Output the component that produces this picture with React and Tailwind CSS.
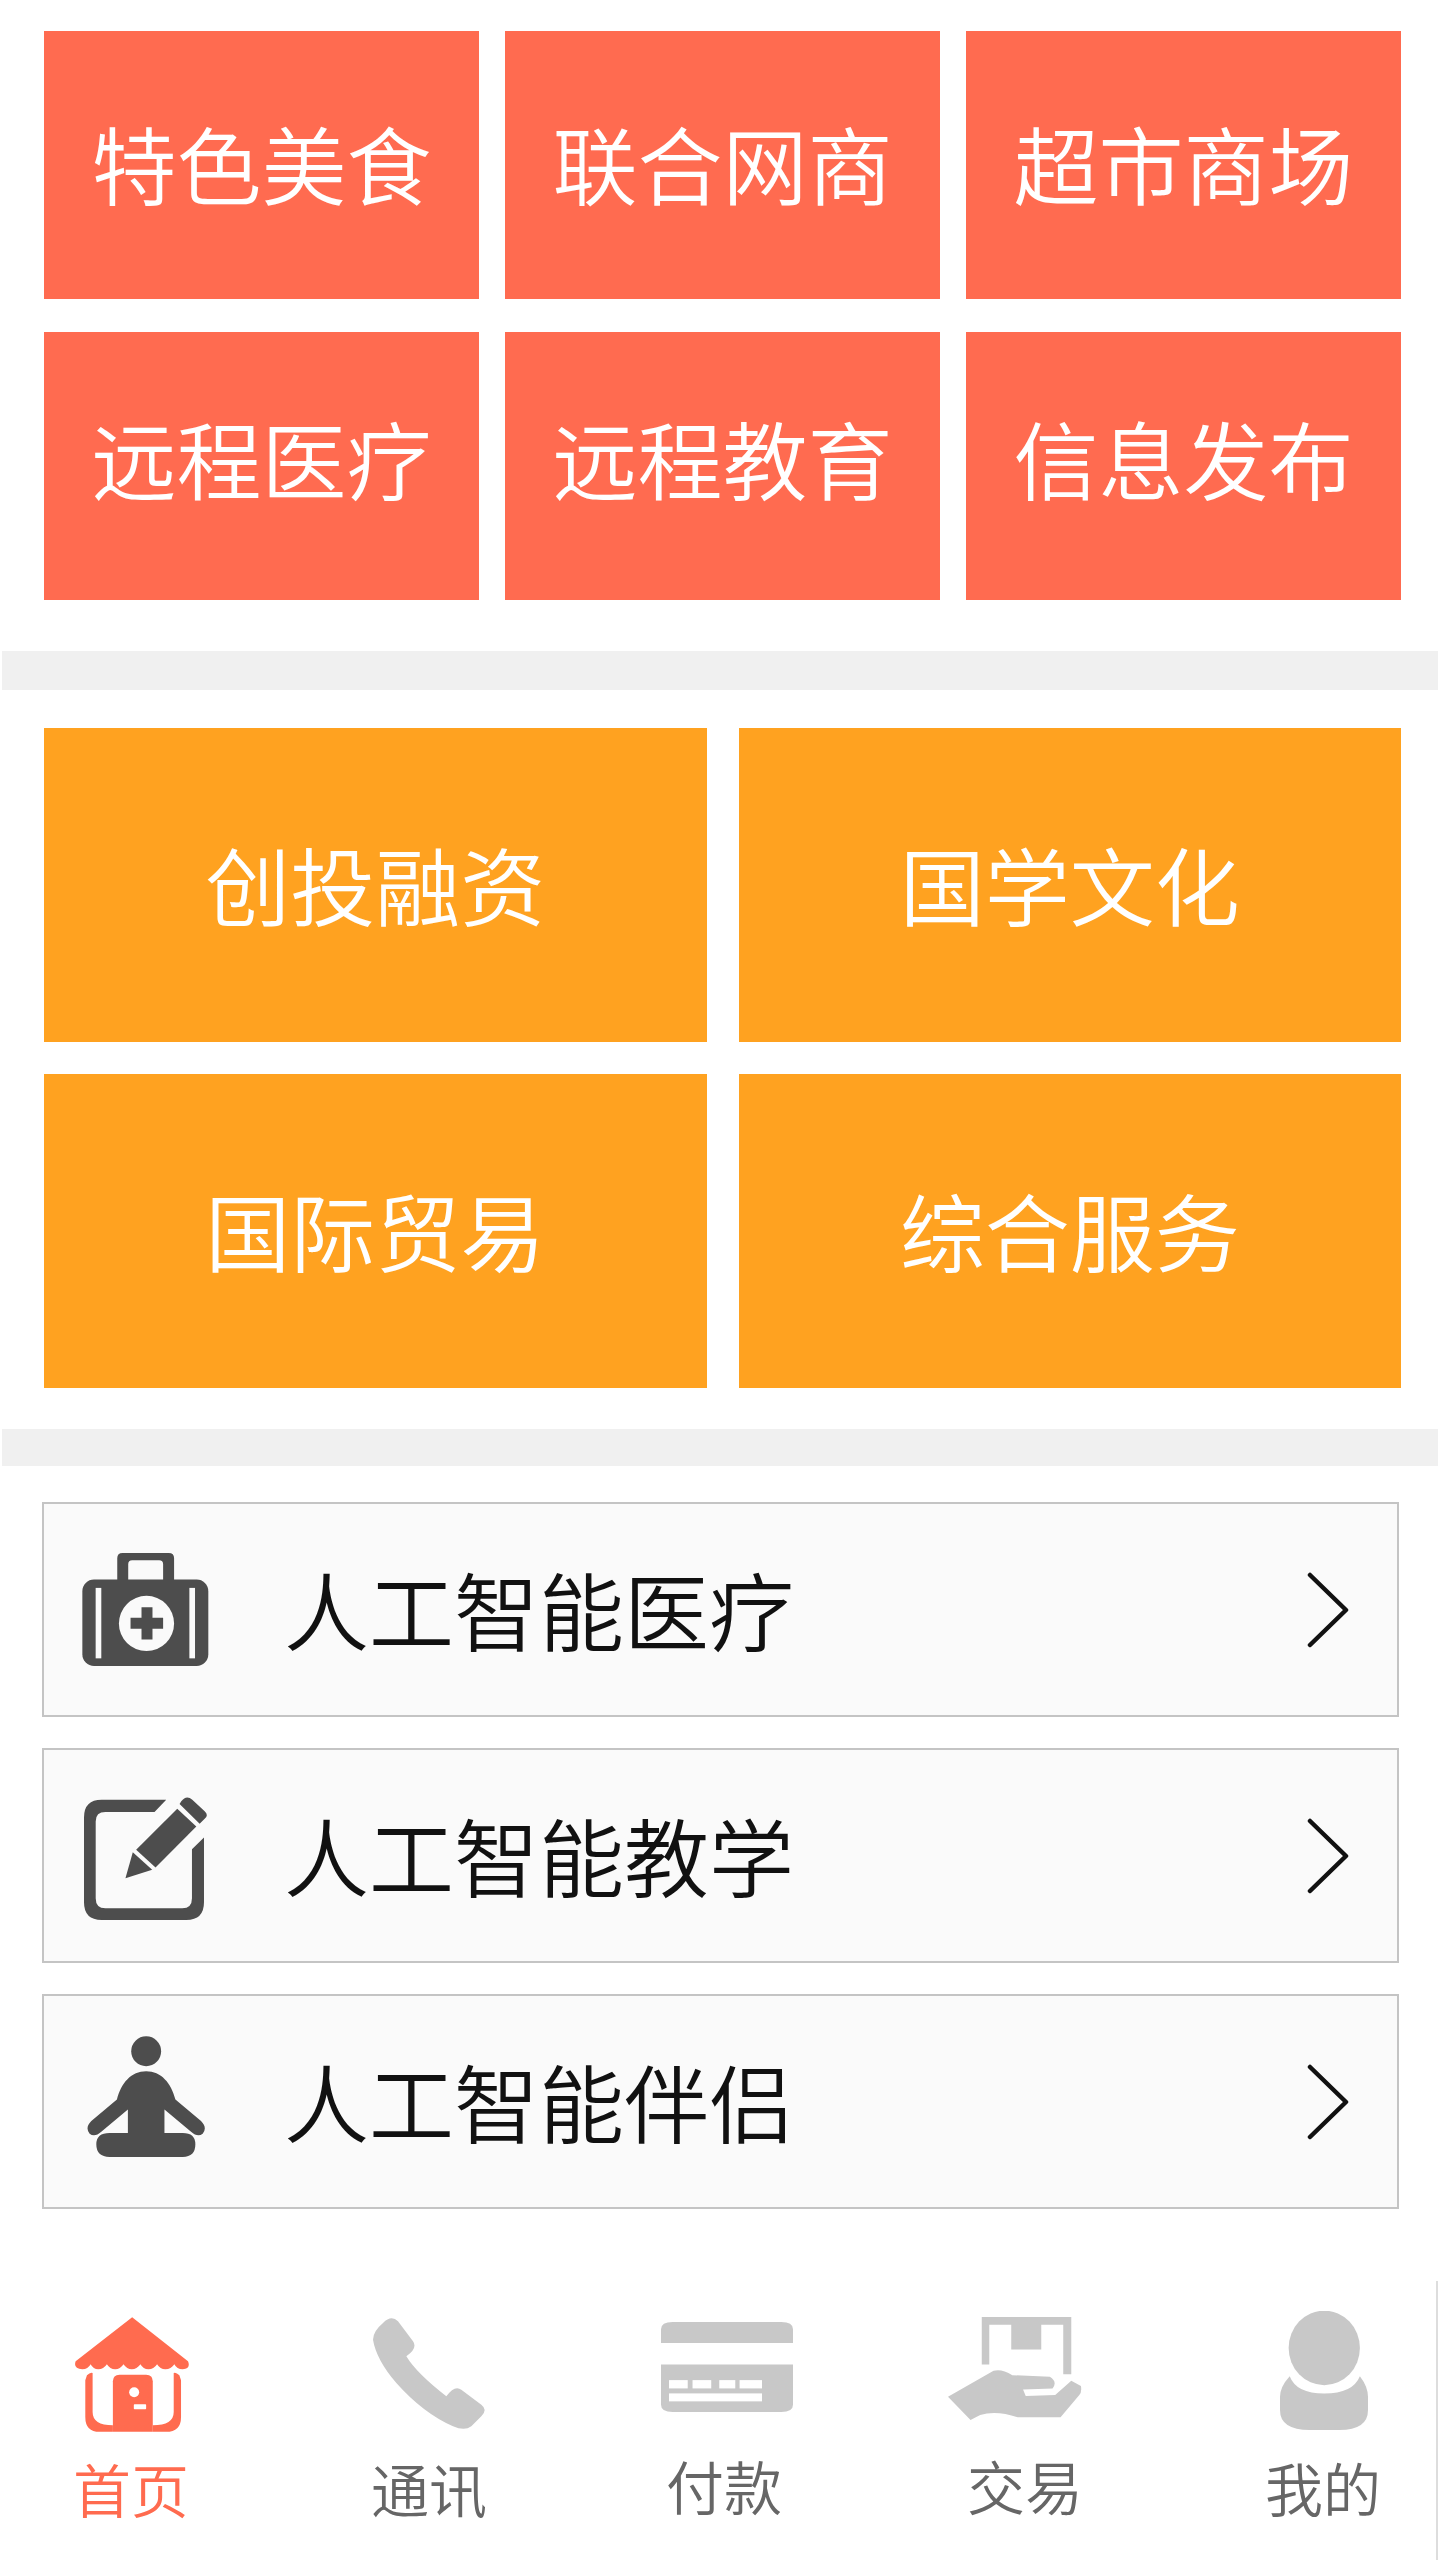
const D = "#4d4d4d";
const G = "#c8c8c8";
const R = "#ff6b4f";

const Medic = () => (
  <svg width="127" height="113" viewBox="247 218 380 340">
    <path fillRule="evenodd" fill={D} d="M368 218H507Q523 218 523 234V300H490V252Q490 240 478 240H397Q385 240 385 252V300H352V234Q352 218 368 218Z" />
    <rect x="247" y="298" width="379" height="260" rx="35" fill={D} />
    <rect x="287" y="323" width="17" height="212" fill="#fafafa" />
    <rect x="569" y="323" width="17" height="212" fill="#fafafa" />
    <circle cx="440" cy="430" r="83" fill="#fafafa" />
    <path fill={D} d="M425 381H458V413H490V446H458V478H425V446H392V413H425Z" />
  </svg>
);

const Edit = () => (
  <svg className="mt-[6px]" width="123" height="123" viewBox="254 947 368 368">
    <path fill={D} d="M500 955L465 992H318Q289 992 289 1020V1250Q289 1280 318 1280H548Q577 1280 577 1250V1103L613 1068V1262Q613 1315 560 1315H307Q254 1315 254 1262V1008Q254 955 307 955Z" />
    <path fill={D} d="M533 982L590 1035L468 1158L410 1105Z" />
    <path fill={D} d="M545 960Q560 940 578 955L615 990Q628 1002 615 1012L600 1027L540 968Z" />
    <path fill={D} d="M400 1112L458 1165L378 1190Z" />
  </svg>
);

const Meditate = () => (
  <svg className="mb-[10px]" width="118" height="122" viewBox="262 225 355 365">
    <circle cx="440" cy="270" r="45" fill={D} />
    <path fill={D} d="M440 330C395 330 365 365 352 415L275 480Q255 500 270 518Q285 530 305 512L385 445V516H330Q290 516 290 550Q290 588 330 588H550Q588 588 588 550Q588 516 550 516H495V445L575 512Q595 530 610 518Q625 500 605 480L528 415C515 365 485 330 440 330Z" />
  </svg>
);

const Chevron = () => (
  <svg width="42" height="76" viewBox="0 0 42 76" fill="none" stroke="#111" strokeWidth="4.5" strokeLinecap="round" strokeLinejoin="round">
    <path d="M3 3L39 38L3 73" />
  </svg>
);

const Home = () => (
  <svg className="mt-[36px]" width="117" height="116" viewBox="220 170 352 348">
    <path fill={R} d="M398 170L566 303Q575 325 550 327Q532 327 525 312Q515 327 498 327Q482 327 473 312Q463 327 447 327Q431 327 423 312Q412 327 397 327Q382 327 372 312Q362 327 347 327Q331 327 322 312Q312 327 296 327Q281 327 273 312Q265 327 248 327Q220 325 228 303Z" />
    <path fill={R} d="M262 345Q272 335 279 338V455Q279 495 340 495V515H300Q257 515 257 470V360Z" />
    <path fill={R} d="M540 345Q530 335 523 338V455Q523 495 460 495V515H500Q545 515 545 470V360Z" />
    <path fill={R} d="M340 363Q340 343 360 343H440Q460 343 460 363V515H340Z" />
    <circle cx="404" cy="396" r="15" fill="#fff" />
    <rect x="403" y="432" width="37" height="15" rx="2" fill="#fff" />
  </svg>
);

const Phone = () => (
  <svg className="mt-[37px]" width="112" height="112" viewBox="1120 175 336 336">
    <path fill={G} d="M1150 190Q1175 165 1195 185L1240 245Q1255 265 1220 290Q1250 340 1340 410Q1365 375 1385 390L1445 435Q1465 450 1445 470L1415 500Q1395 515 1360 500Q1270 460 1190 370Q1130 300 1120 240Q1120 215 1150 190Z" />
  </svg>
);

const Card = () => (
  <svg className="mt-[41px]" width="132" height="90" viewBox="113 187 247 271" preserveAspectRatio="none">
    <path fill={G} d="M135 187H338Q360 187 360 209V250H113V209Q113 187 135 187Z" />
    <path fill={G} d="M113 315H360V436Q360 458 338 458H135Q113 458 113 436Z" />
    <rect x="128" y="362" width="35" height="25" fill="#fff" />
    <rect x="172" y="362" width="35" height="25" fill="#fff" />
    <rect x="222" y="362" width="30" height="25" fill="#fff" />
    <rect x="260" y="362" width="42" height="25" fill="#fff" />
    <rect x="128" y="402" width="174" height="24" fill="#fff" />
  </svg>
);

const Trade = () => (
  <svg className="mt-[36px] mr-[20px]" width="134" height="103" viewBox="650 170 250 310" preserveAspectRatio="none">
    <path fill={G} d="M713 170H880V342H865V193H824V268H768V193H727V313H713Z" />
    <path fill={G} d="M650 410L735 332Q750 325 770 345L840 350Q855 365 845 385L790 388L795 408L850 405L880 362L898 378Q900 395 895 405L860 472H780Q740 450 710 465L692 480Z" />
  </svg>
);

const Person = () => (
  <svg className="mt-[30px] ml-[2px]" width="88" height="119" viewBox="1270 152 163 358" preserveAspectRatio="none">
    <ellipse cx="1352" cy="263" rx="66" ry="112" fill={G} />
    <path fill={G} d="M1288 348Q1300 400 1352 400Q1405 400 1418 348Q1433 380 1433 410V450Q1433 510 1380 510H1325Q1270 510 1270 450V410Q1270 380 1288 348Z" />
  </svg>
);

const red = [
  ["特色美食", "pb-[8px]"],
  ["联合网商", "pb-[8px]"],
  ["超市商场", "pb-[8px]"],
  ["远程医疗", "pb-[20px]"],
  ["远程教育", "pb-[20px]"],
  ["信息发布", "pb-[20px]"],
];
const orange = ["创投融资", "国学文化", "国际贸易", "综合服务"];
const list = [
  ["人工智能医疗", Medic],
  ["人工智能教学", Edit],
  ["人工智能伴侣", Meditate],
];
const tabs = [
  ["首页", Home, "mt-[178px] text-[#ff6b4f]"],
  ["通讯", Phone, "mt-[178px] text-[#666666]"],
  ["付款", Card, "mt-[175px] mr-[6px] text-[#666666]"],
  ["交易", Trade, "mt-[175px] text-[#666666]"],
  ["我的", Person, "mt-[177px] text-[#666666]"],
];

export default function App() {
  return (
    <div className="relative w-[1440px] h-[2560px] bg-white font-['Noto_Sans_CJK_SC',sans-serif] font-[350]">
      <div className="pt-[31px] pl-[44px]">
        <div className="w-[1357px] grid grid-cols-3 gap-x-[26px] gap-y-[33px]">
          {red.map(([t, cls]) => (
            <div key={t} className={"h-[268px] bg-[#ff6b50] text-white text-[85px] leading-none flex items-center justify-center " + cls}>{t}</div>
          ))}
        </div>
      </div>
      <div className="mt-[51px] ml-[2px] w-[1436px] h-[39px] bg-[#f0f0f0]" />
      <div className="mt-[38px] pl-[44px]">
        <div className="w-[1357px] grid grid-cols-2 gap-x-[32px] gap-y-[32px]">
          {orange.map((t) => (
            <div key={t} className="h-[314px] bg-[#ffa220] text-white text-[85px] leading-none flex items-center justify-center pb-[6px]">{t}</div>
          ))}
        </div>
      </div>
      <div className="mt-[41px] ml-[2px] w-[1436px] h-[37px] bg-[#f0f0f0]" />
      <div className="mt-[36px] ml-[42px] w-[1357px] flex flex-col gap-[31px]">
        {list.map(([t, Icon]) => (
          <div key={t} className="h-[215px] bg-[#fafafa] border-2 border-[#c4c4c4] flex items-center pl-[38px] pr-[48px]">
            <div className="w-[127px] h-full flex items-center justify-center">
              <Icon />
            </div>
            <div className="ml-[75px] flex-1 text-[85px] leading-none text-[#111] pb-[4px]">{t}</div>
            <Chevron />
          </div>
        ))}
      </div>
      <div className="mt-[72px] w-[1438px] h-[279px] border-r-2 border-[#dddddd] flex pl-[31px] gap-[98px]">
        {tabs.map(([t, Icon, cls]) => (
          <div key={t} className="relative w-[200px] flex flex-col items-center">
            <div className="h-0 w-full flex items-start justify-center">
              <Icon />
            </div>
            <div className={"text-[58px] leading-none " + cls}>{t}</div>
          </div>
        ))}
      </div>
    </div>
  );
}
